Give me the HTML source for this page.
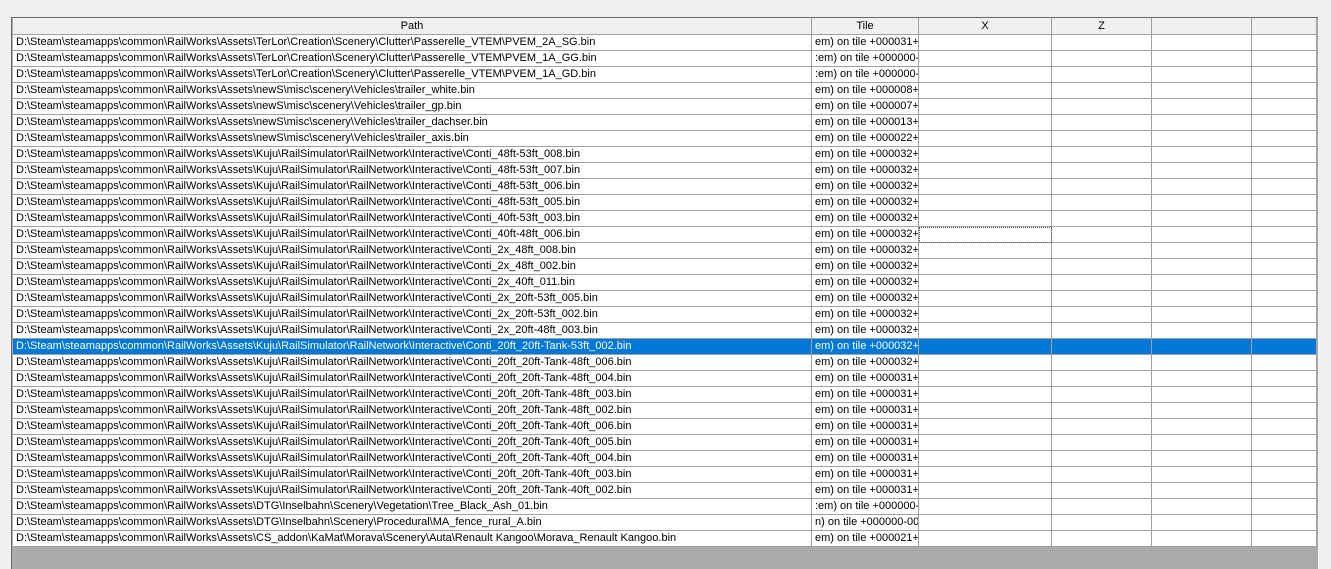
<!DOCTYPE html>
<html><head><style>
body{margin:0;width:1331px;height:569px;background:#f0f0f0;position:relative;overflow:hidden;font-family:"Liberation Sans",sans-serif;font-size:11px;}
#g{position:absolute;left:11px;top:17px;width:1307px;height:552px;background:#ababab;border-left:1px solid #696969;border-top:1px solid #696969;box-sizing:border-box;}
.r{position:absolute;left:1px;height:16px;width:1304px;}
.c{position:absolute;top:0;height:15px;border-right:1px solid #a0a0a0;border-bottom:1px solid #a0a0a0;background:#fff;line-height:15px;white-space:nowrap;overflow:hidden;padding-left:3px;box-sizing:content-box;color:#000;}
.h .c{background:#f0f0f0;text-align:center;padding-left:0;height:16px;line-height:16px;}
.s .c{background:#0078d7;color:#fff;}
.f{outline:1px dotted #555;outline-offset:-1px;}
</style></head><body>
<div id="g"></div>
<script>
var paths=["D:\\Steam\\steamapps\\common\\RailWorks\\Assets\\TerLor\\Creation\\Scenery\\Clutter\\Passerelle_VTEM\\PVEM_2A_SG.bin","D:\\Steam\\steamapps\\common\\RailWorks\\Assets\\TerLor\\Creation\\Scenery\\Clutter\\Passerelle_VTEM\\PVEM_1A_GG.bin","D:\\Steam\\steamapps\\common\\RailWorks\\Assets\\TerLor\\Creation\\Scenery\\Clutter\\Passerelle_VTEM\\PVEM_1A_GD.bin","D:\\Steam\\steamapps\\common\\RailWorks\\Assets\\newS\\misc\\scenery\\Vehicles\\trailer_white.bin","D:\\Steam\\steamapps\\common\\RailWorks\\Assets\\newS\\misc\\scenery\\Vehicles\\trailer_gp.bin","D:\\Steam\\steamapps\\common\\RailWorks\\Assets\\newS\\misc\\scenery\\Vehicles\\trailer_dachser.bin","D:\\Steam\\steamapps\\common\\RailWorks\\Assets\\newS\\misc\\scenery\\Vehicles\\trailer_axis.bin"];
var K="D:\\Steam\\steamapps\\common\\RailWorks\\Assets\\Kuju\\RailSimulator\\RailNetwork\\Interactive\\";
["Conti_48ft-53ft_008","Conti_48ft-53ft_007","Conti_48ft-53ft_006","Conti_48ft-53ft_005","Conti_40ft-53ft_003","Conti_40ft-48ft_006","Conti_2x_48ft_008","Conti_2x_48ft_002","Conti_2x_40ft_011","Conti_2x_20ft-53ft_005","Conti_2x_20ft-53ft_002","Conti_2x_20ft-48ft_003","Conti_20ft_20ft-Tank-53ft_002","Conti_20ft_20ft-Tank-48ft_006","Conti_20ft_20ft-Tank-48ft_004","Conti_20ft_20ft-Tank-48ft_003","Conti_20ft_20ft-Tank-48ft_002","Conti_20ft_20ft-Tank-40ft_006","Conti_20ft_20ft-Tank-40ft_005","Conti_20ft_20ft-Tank-40ft_004","Conti_20ft_20ft-Tank-40ft_003","Conti_20ft_20ft-Tank-40ft_002"].forEach(function(n){paths.push(K+n+".bin")});
paths.push("D:\\Steam\\steamapps\\common\\RailWorks\\Assets\\DTG\\Inselbahn\\Scenery\\Vegetation\\Tree_Black_Ash_01.bin");
paths.push("D:\\Steam\\steamapps\\common\\RailWorks\\Assets\\DTG\\Inselbahn\\Scenery\\Procedural\\MA_fence_rural_A.bin");
paths.push("D:\\Steam\\steamapps\\common\\RailWorks\\Assets\\CS_addon\\KaMat\\Morava\\Scenery\\Auta\\Renault Kangoo\\Morava_Renault Kangoo.bin");
var tiles=["em) on tile +000031+l",":em) on tile +000000-0",":em) on tile +000000-0","em) on tile +000008+l","em) on tile +000007+l","em) on tile +000013+l","em) on tile +000022+l"];
for(var i=0;i<12;i++)tiles.push("em) on tile +000032+l");
for(var i=0;i<2;i++)tiles.push("em) on tile +000032+l");
for(var i=0;i<8;i++)tiles.push("em) on tile +000031+l");
tiles.push(":em) on tile +000000-0","n) on tile +000000-00","em) on tile +000021+l");
var cols=[[0,798],[799,106],[906,132],[1039,99],[1139,99],[1239,64]];
var g=document.getElementById('g'),h='';
function row(y,cls,vals,fi){var s='<div class="r '+cls+'" style="top:'+y+'px">';cols.forEach(function(c,j){var pad=cls=='h'?0:3;s+='<div class="c'+(fi===j?' f':'')+'" style="left:'+c[0]+'px;width:'+(c[1]-pad)+'px">'+(vals[j]||'')+'</div>'});return s+'</div>';}
h+=row(0,'h',['Path','Tile','X','Z','','']);
for(var i=0;i<32;i++){h+=row(17+i*16,i==19?'s':'',[paths[i],tiles[i]],i==12?2:null);}
g.innerHTML=h;
</script>
</body></html>
